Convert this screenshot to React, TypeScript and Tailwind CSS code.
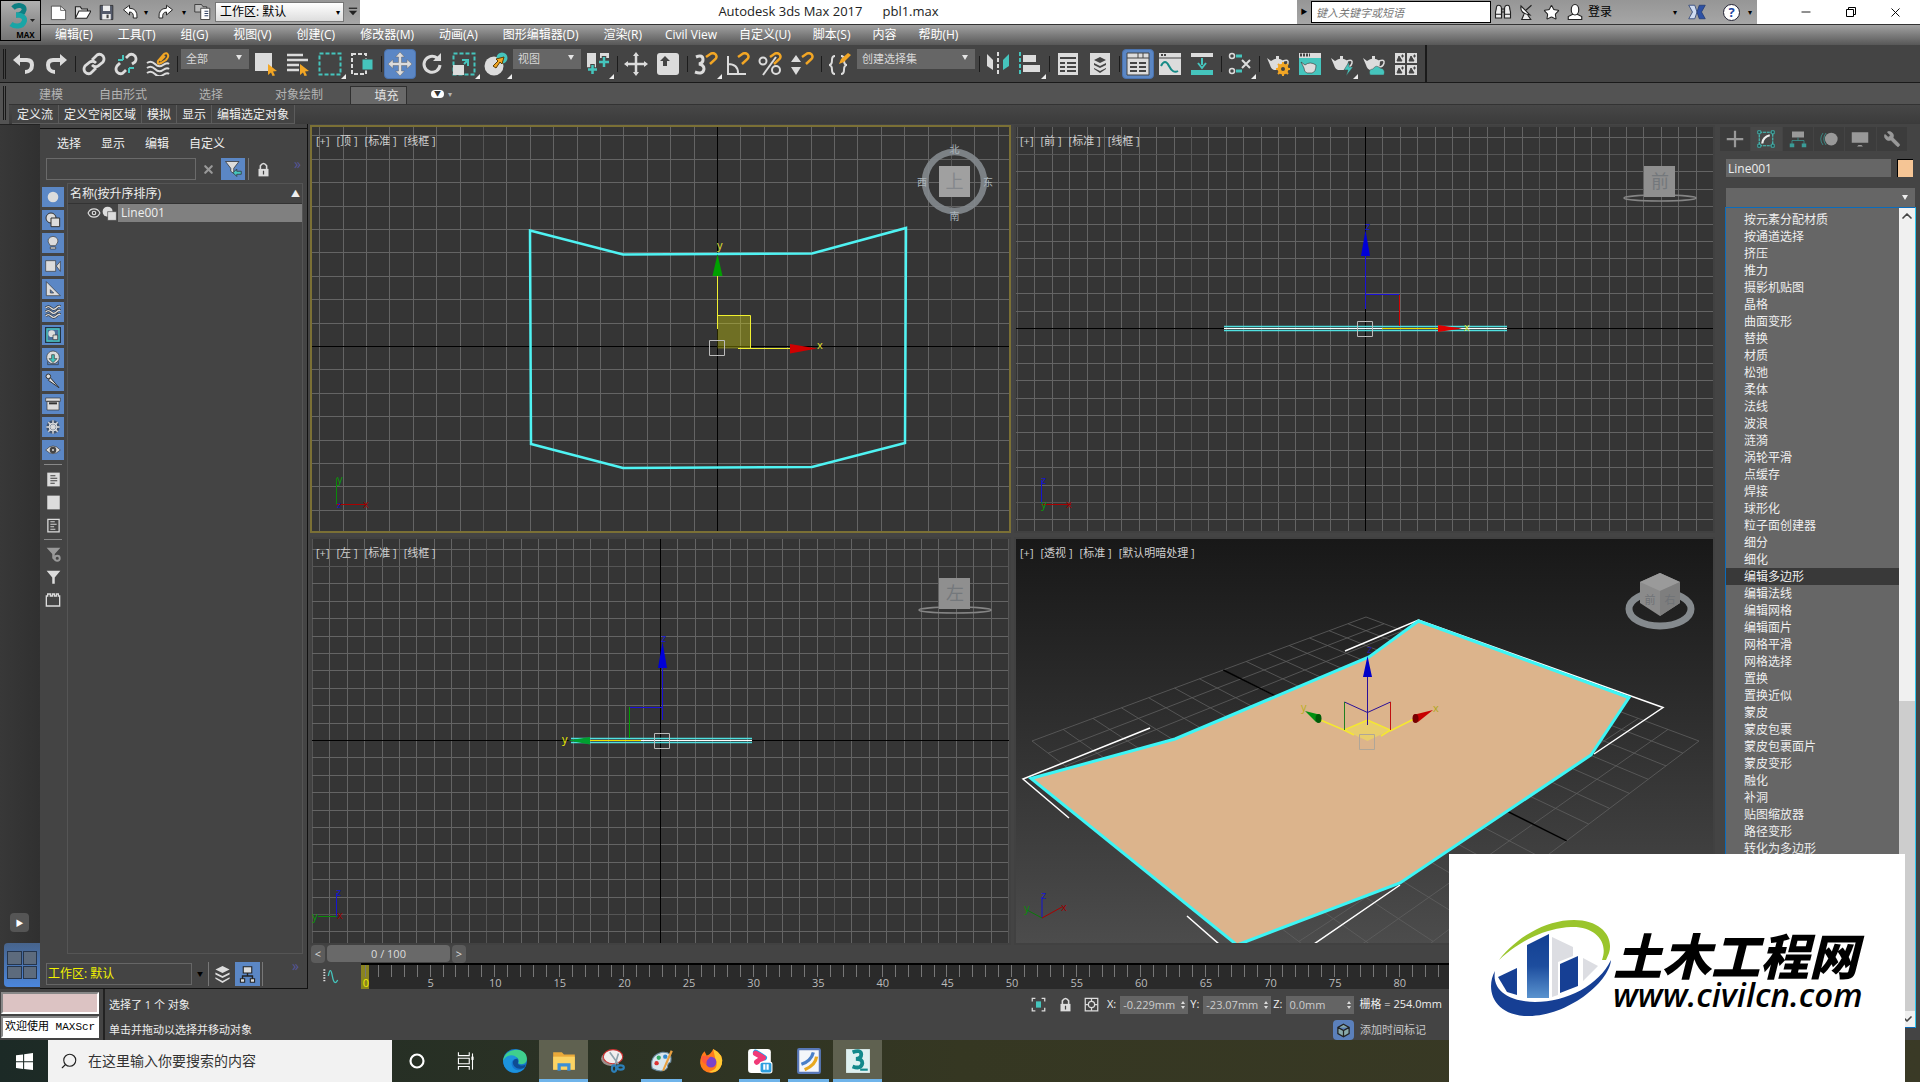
import type { ReactNode } from 'react'
import { ChevronUp, ChevronDown, Minus, X, Search, Star, Wrench, Eye } from 'lucide-react'

const LIGHT = '#dcdcdc'
const TEAL = '#45c5bd'
const GOLD = '#f2a625'

const editMenus = ['编辑(E)', '工具(T)', '组(G)', '视图(V)', '创建(C)', '修改器(M)', '动画(A)', '图形编辑器(D)', '渲染(R)']
const extraMenus = ['Civil View', '自定义(U)', '脚本(S)', '内容', '帮助(H)']

const modifiers = [
  '按元素分配材质', '按通道选择', '挤压', '推力', '摄影机贴图', '晶格', '曲面变形', '替换', '材质', '松弛',
  '柔体', '法线', '波浪', '涟漪', '涡轮平滑', '点缓存', '焊接', '球形化', '粒子面创建器', '细分', '细化',
  '编辑多边形', '编辑法线', '编辑网格', '编辑面片', '网格平滑', '网格选择', '置换', '置换近似', '蒙皮',
  '蒙皮包裹', '蒙皮包裹面片', '蒙皮变形', '融化', '补洞', '贴图缩放器', '路径变形', '转化为多边形',
]

function Glyph({ children, size = 24, className = '' }: { children: ReactNode; size?: number; className?: string }) {
  return (
    <svg viewBox="0 0 24 24" width={size} height={size} fill="none" aria-hidden="true" className={`shrink-0 ${className}`}>
      {children}
    </svg>
  )
}

function Tool({ label, active, flyout, children }: { label: string; active?: boolean; flyout?: boolean; children: ReactNode }) {
  return (
    <button
      aria-label={label}
      className={`relative flex h-[30px] w-8 shrink-0 items-center justify-center ${active ? 'rounded-sm border border-[#4a72ad] bg-[#5b87c5]' : ''}`}
    >
      <Glyph>{children}</Glyph>
      {flyout && (
        <svg viewBox="0 0 5 5" className="absolute right-0 bottom-0 h-[5px] w-[5px]" aria-hidden="true">
          <path d="M5 0V5H0Z" fill="#eee" />
        </svg>
      )}
    </button>
  )
}

function Sep() {
  return <span className="flex h-[30px] w-[6px] shrink-0 items-center justify-center"><span className="h-4 w-px bg-[#1c1c1c]" /></span>
}

function ToolSelect({ label, value, width }: { label: string; value: string; width: string }) {
  return (
    <span className={`relative mx-px h-5 shrink-0 ${width}`}>
      <select aria-label={label} className="block h-5 w-full appearance-none bg-[#666] pl-[5px] text-[11px] leading-4 text-[#d8d8d8]">
        <option>{value}</option>
      </select>
      <svg viewBox="0 0 6 5" className="pointer-events-none absolute top-[6px] right-[7px] h-[5px] w-[6px]" aria-hidden="true">
        <path d="M0 0H6L3 5Z" fill="#e5e5e5" />
      </svg>
    </span>
  )
}

function Padlock({ size }: { size: number }) {
  return (
    <Glyph size={size}>
      <path d="M4 11H20V23H4Z" fill={LIGHT} />
      <path d="M7 11V6Q12-1 17 6V11" stroke={LIGHT} strokeWidth="2.500" />
      <path d="M11 14H13V20H11Z" fill="#444" />
    </Glyph>
  )
}

const cursor = <path d="M14 12L23 19L19 19.500L21 23.500L18.500 24L17 20.500L14 23Z" fill={GOLD} />
const magnet = <path d="M12 5L17 1.500C21 0 24 4 21.500 7L16 12" stroke={GOLD} strokeWidth="2.500" />
const teapot = (
  <>
    <path d="M1 6L5 9Q11 4 18 9Q18 17 14 18H8Q5 17 4 13Z" fill={LIGHT} />
    <path d="M17 9Q23 7 22 11Q21 15 17 15" stroke={LIGHT} strokeWidth="1.500" />
    <path d="M10 4H13V7H10Z" fill={LIGHT} />
  </>
)

function TitleBar() {
  return (
    <header className="relative flex h-6 shrink-0 bg-white">
      <div className="flex w-[360px] shrink-0 items-center bg-linear-to-b from-[#969696] to-[#a6a6a6] pl-[50px] text-black">
        <button aria-label="新建" className="w-6">
          <Glyph size={17}><path d="M2 3H15L22 9V22H2Z" fill="#fff" stroke="#333" /><path d="M15 3V9H22" stroke="#333" /></Glyph>
        </button>
        <button aria-label="打开" className="w-6">
          <Glyph size={17}><path d="M2 20V4H9L11 7H19V10" fill="#ddd" stroke="#222" strokeWidth="1.500" /><path d="M2 20L7 10H24L18 20Z" fill="#fff" stroke="#222" strokeWidth="1.500" /></Glyph>
        </button>
        <button aria-label="保存" className="w-6">
          <Glyph size={17}><path d="M3 2H21V22H3Z" fill="#555b6b" stroke="#222" /><path d="M7 2H17V10H7ZM6 14H18V22H6Z" fill="#eee" /><path d="M12 15H15V20H12Z" fill="#444" /></Glyph>
        </button>
        <button aria-label="撤消" className="w-[22px]">
          <Glyph size={18}><path d="M2 9L10 3V7Q21 7 20 20H15Q16 12 10 12V16Z" fill="#fff" stroke="#222" strokeWidth="1.300" /></Glyph>
        </button>
        <span className="w-3 text-[8px]">▾</span>
        <button aria-label="重做" className="w-[22px]">
          <Glyph size={18}><path d="M22 9L14 3V7Q3 7 4 20H9Q8 12 14 12V16Z" fill="#fff" stroke="#222" strokeWidth="1.300" /></Glyph>
        </button>
        <span className="w-4 pl-1 text-[8px]">▾</span>
        <button aria-label="项目文件夹" className="w-[21px]">
          <Glyph size={18}><path d="M1 2H10L12 5H17V12H1Z" fill="#bbb" stroke="#222" /><path d="M9 7H21V22H9Z" fill="#fff" stroke="#222" /><path d="M14 11H19M14 14H19M14 17H19" stroke="#346" strokeWidth="1.500" /></Glyph>
        </button>
        <span className="relative h-5 w-[129px]">
          <select aria-label="工作区" className="block h-5 w-full appearance-none border border-[#777] bg-linear-to-b from-white to-[#ddd] pl-1 text-xs leading-4 text-black">
            <option>工作区: 默认</option>
          </select>
          <span className="pointer-events-none absolute top-1 right-1 text-[8px] leading-3">▾</span>
        </span>
        <button aria-label="自定义快速访问" className="ml-1">
          <Glyph size={10}><path d="M2 3H22" stroke="#222" strokeWidth="3" /><path d="M2 9H22L12 20Z" fill="#222" /></Glyph>
        </button>
      </div>
      <h1 className="flex flex-1 items-center justify-center gap-5 pb-px text-[13px] text-[#222]">
        <span>Autodesk 3ds Max 2017</span>
        <span>pbl1.max</span>
      </h1>
      <div className="flex w-[460px] shrink-0 items-center bg-linear-to-b from-[#969696] to-[#a6a6a6] text-black">
        <span className="w-[14px] text-center text-[7px]">▶</span>
        <input
          aria-label="键入关键字或短语"
          placeholder="键入关键字或短语"
          className="h-[22px] w-[180px] border border-black bg-white px-1 text-[11px] italic placeholder:text-[#777]"
        />
        <button aria-label="搜索" className="flex w-6 justify-center">
          <Glyph size={18}><path d="M3 8Q3 3 6 3Q10 3 10 8V20H2V12ZM21 8Q21 3 18 3Q14 3 14 8V20H22V12Z" fill="#eee" stroke="#222" strokeWidth="1.500" /><path d="M10 8H14V12H10ZM2 15H10M14 15H22" stroke="#222" strokeWidth="1.500" /></Glyph>
        </button>
        <button aria-label="通讯中心" className="flex w-6 justify-center">
          <Glyph size={18}><path d="M4 4Q2 14 16 16Z" fill="#fff" stroke="#222" strokeWidth="1.500" /><path d="M10 10L18 3M8 15L5 22H17L13 16" fill="#eee" stroke="#222" strokeWidth="1.500" /></Glyph>
        </button>
        <button aria-label="收藏夹" className="flex w-6 justify-center"><Star size={17} fill="#fff" stroke="#222" strokeWidth={1.5} /></button>
        <button aria-label="登录" className="flex w-[110px] items-center gap-1 pl-[3px] text-xs">
          <Glyph size={18}><path d="M3 22V18L9 15H15L21 18V22Z" fill="#fff" stroke="#222" strokeWidth="1.500" /><ellipse cx="12" cy="9" rx="5" ry="7" fill="#fff" stroke="#222" strokeWidth="1.500" /></Glyph>
          登录
        </button>
        <span className="w-[15px] text-[8px]">▾</span>
        <button aria-label="Exchange" className="flex w-[35px] justify-start">
          <Glyph size={18}><path d="M1 3H9L12 12L9 21H1L6 12Z" fill="#cfdcf2" stroke="#223a70" /><path d="M23 3H15L12 12L15 21H23L18 12Z" fill="#2d51a5" stroke="#223a70" /></Glyph>
        </button>
        <button aria-label="帮助" className="flex h-[17px] w-[17px] items-center justify-center rounded-full border border-[#223] bg-white text-[13px] leading-4 font-bold text-[#1d45a0]">?</button>
        <span className="pl-2 text-[8px]">▾</span>
      </div>
      <div className="mr-[2px] ml-[26px] flex w-[135px] shrink-0 text-black">
        <button aria-label="最小化" className="flex flex-1 items-center justify-center"><Minus size={14} strokeWidth={1.5} /></button>
        <button aria-label="还原" className="flex flex-1 items-center justify-center">
          <svg viewBox="0 0 10 10" className="h-[10px] w-[10px]" fill="none" stroke="#000"><path d="M.5 2.500H7.500V9.500H.5ZM2.500 2.500V.5H9.500V7.500H7.500" /></svg>
        </button>
        <button aria-label="关闭" className="flex flex-1 items-center justify-center"><X size={15} strokeWidth={1.5} /></button>
      </div>
      <button aria-label="应用程序" className="absolute top-0 left-0 z-10 flex h-[41px] w-[41px] flex-col border border-black bg-linear-to-b from-[#b0b0b0] to-[#757575] pt-[2px] pl-[6px]">
        <svg viewBox="0 0 28 26" className="h-[26px] w-7" fill="none" aria-hidden="true">
          <path d="M6 5C10 1 18 2 17 7C16 11 12 12 9 12" stroke="#0d7f83" strokeWidth="5" />
          <path d="M9 12C15 12 19 14 17 19C15 24 8 24 4 21" stroke="#19a5a6" strokeWidth="5" />
          <path d="M23 16H28L25.500 19Z" fill="#222" />
        </svg>
        <span className="pl-1 text-[8px] leading-[11px] font-bold text-black">MAX</span>
      </button>
    </header>
  )
}

function Toolbar() {
  return (
    <div className="flex h-[38px] shrink-0 border-b border-[#1a1a1a] bg-[#444]">
      <div className="flex items-start border-r-2 border-[#1a1a1a] pt-[4px] pr-[3px]">
        <span className="mr-[2px] ml-[3px] h-[30px] w-[3px] border-x border-[#181818]" />
        <Tool label="撤消"><path d="M1 8L8 2V6H15Q22 6 22 13Q22 21 13 22V18Q18 18 18 13Q18 10 14 10H8V14Z" fill={LIGHT} /></Tool>
        <Tool label="重做"><path d="M23 8L16 2V6H9Q2 6 2 13Q2 21 11 22V18Q6 18 6 13Q6 10 10 10H16V14Z" fill={LIGHT} /></Tool>
        <Sep />
        <Tool label="选择并链接">
          <g stroke={LIGHT} strokeWidth="2.800"><path d="M10 8L15 3Q18 1 21 4Q23 7 21 10L16 14Q13 16 10 13" /><path d="M14 16L9 21Q6 23 3 20Q1 17 3 14L8 10Q11 8 14 11" /></g>
        </Tool>
        <Tool label="断开选择链接">
          <g stroke={LIGHT} strokeWidth="2.800"><path d="M12 6L15 3Q18 1 21 4Q23 7 21 10L18 12" /><path d="M12 18L9 21Q6 23 3 20Q1 17 3 14L6 11" /></g>
          <path d="M9 3V8M4 8H9M15 21V16M15 16H20" stroke={TEAL} strokeWidth="2" />
        </Tool>
        <Tool label="绑定到空间扭曲">
          <g stroke={LIGHT} strokeWidth="2"><path d="M1 11Q5 8 9 12T17 13T23 12M1 16Q5 13 9 17T17 18T23 17M1 21Q5 18 9 22T17 23T23 22" /></g>
          <path d="M12 9L18 2Q21 0 22 3Q23 5 20 8L15 11Q11 13 12 9ZM14 9L19 4" stroke={GOLD} strokeWidth="2" />
        </Tool>
        <Sep />
        <ToolSelect label="选择过滤器" value="全部" width="w-[68px]" />
        <Tool label="选择对象"><path d="M1 1H18V19H1Z" fill={LIGHT} />{cursor}</Tool>
        <Tool label="按名称选择"><path d="M1 3H17M1 8H22M1 13H13M1 18H13" stroke={LIGHT} strokeWidth="2.500" />{cursor}</Tool>
        <Tool label="矩形选择区域" flyout><path d="M1.500 1.500H22.500V22.500H1.500Z" stroke={TEAL} strokeWidth="2" strokeDasharray="4 2" /></Tool>
        <Tool label="窗口/交叉"><path d="M2 2H16V22H2Z" stroke={LIGHT} strokeWidth="2" strokeDasharray="4 2" /><path d="M12 7H23V18H12Z" fill={TEAL} stroke="#444" /></Tool>
        <Sep />
        <Tool label="选择并移动" active>
          <path d="M12 0L16.500 5H13.500V10.500H19V7.500L24 12L19 16.500V13.500H13.500V19H16.500L12 24L7.500 19H10.500V13.500H5V16.500L0 12L5 7.500V10.500H10.500V5H7.500Z" fill={LIGHT} stroke="#666" strokeWidth=".5" />
        </Tool>
        <Tool label="选择并旋转"><path d="M17 6A8 8 0 1 0 20 13" stroke={LIGHT} strokeWidth="3" /><path d="M13 9H21V1Z" fill={LIGHT} /></Tool>
        <Tool label="选择并缩放" flyout>
          <path d="M1.500 1.500H22.500V22.500H1.500Z" stroke={TEAL} strokeWidth="2" strokeDasharray="4 2" />
          <path d="M1 13H12V23H1Z" fill={LIGHT} /><path d="M10 8H16V14M16 8L12 12" stroke={TEAL} strokeWidth="2" />
        </Tool>
        <Tool label="选择并放置" flyout>
          <circle cx="10" cy="14" r="9.500" fill={LIGHT} /><circle cx="18" cy="6" r="5.500" fill={TEAL} />
          <path d="M9 14L14 9L12 7L20 5L18 12L16 10L12 16Z" fill={GOLD} stroke="#5c3d00" />
        </Tool>
        <ToolSelect label="参考坐标系" value="视图" width="w-[68px]" />
        <Tool label="使用轴点中心" flyout>
          <path d="M1 1H10V16H1ZM14 1H23V6H14Z" fill={LIGHT} /><path d="M6.500 12V23M1 17.500H12M18 4V16M12.500 10H23.500" stroke="#444" strokeWidth="4.500" /><path d="M6.500 13V22M2 17.500H11M18 5V15M13 10H23" stroke={TEAL} strokeWidth="2.500" />
        </Tool>
        <Sep />
        <Tool label="选择并操纵"><path d="M12 2V22M2 12H22" stroke={LIGHT} strokeWidth="2.500" /><path d="M12 0L15 4H9ZM12 24L15 20H9ZM0 12L4 9V15ZM24 12L20 9V15Z" fill={LIGHT} /></Tool>
        <Tool label="键盘快捷键覆盖切换"><rect x="1" y="1" width="22" height="22" rx="3" fill={LIGHT} /><path d="M9 4L14 9H11V14H7V9H4Z" fill="#444" /></Tool>
        <Sep />
        <Tool label="捕捉开关" flyout><path d="M2 5Q9 2 9 8Q9 11 5 12Q10 13 10 17Q9 23 1 20" stroke={LIGHT} strokeWidth="3" />{magnet}</Tool>
        <Tool label="角度捕捉切换"><path d="M2 4V22H20M2 12Q12 12 12 21" stroke={LIGHT} strokeWidth="2" />{magnet}</Tool>
        <Tool label="百分比捕捉切换"><path d="M18 5L5 23" stroke={LIGHT} strokeWidth="2" /><circle cx="5" cy="9" r="3.500" stroke={LIGHT} strokeWidth="2" /><circle cx="18" cy="18" r="4" stroke={LIGHT} strokeWidth="2" />{magnet}</Tool>
        <Tool label="微调器捕捉切换"><path d="M6 3L11 10H1ZM6 23L11 15H1Z" fill={LIGHT} />{magnet}</Tool>
        <Sep />
        <Tool label="编辑命名选择集"><path d="M7 4Q4 4 4 8Q4 13 1 13Q4 13 4 18Q4 22 7 22M13 4Q16 4 16 8Q16 13 19 13Q16 13 16 18Q16 22 13 22" stroke={LIGHT} strokeWidth="2" /><path d="M11 12L13 7L20 1L23 3L16 10Z" fill={GOLD} /></Tool>
        <ToolSelect label="命名选择集" value="创建选择集" width="w-[118px]" />
        <Sep />
        <Tool label="镜像"><path d="M1 2L7 8V18L1 14Z" fill={LIGHT} /><path d="M23 2L17 8V18L23 14Z" fill={TEAL} /><path d="M12 0V24" stroke={LIGHT} strokeWidth="2" strokeDasharray="4 2" /></Tool>
        <Tool label="对齐" flyout><path d="M2 0V24" stroke={TEAL} strokeWidth="2" strokeDasharray="4 2" /><path d="M5 3H18V10H5ZM5 13H22V20H5Z" fill={LIGHT} /></Tool>
        <Sep />
        <Tool label="切换场景资源管理器"><path d="M2 1H22V23H2Z" fill={LIGHT} /><path d="M4 6H20M4 11H9M11 11H20M4 15H9M11 15H20M4 19H9M11 19H20" stroke="#444" strokeWidth="2" /></Tool>
        <Tool label="切换层资源管理器"><path d="M2 1H22V23H2Z" fill={LIGHT} /><path d="M12 5L18 8L12 11L6 8ZM6 11L12 14L18 11V13L12 16L6 13ZM6 16L12 19L18 16V17L12 21L6 17Z" fill="#444" /></Tool>
        <Sep />
        <Tool label="切换功能区" active><path d="M1 1H23V23H1Z" fill={LIGHT} stroke="#444" /><path d="M1 6H23M12 1V6M17 1V6" stroke="#444" /><path d="M4 11H11M13 11H20M4 15H11M13 15H20M4 19H11M13 19H20" stroke="#444" strokeWidth="2" /></Tool>
        <Tool label="曲线编辑器"><path d="M1 1H23V23H1Z" fill={LIGHT} /><path d="M3 3H9" stroke="#444" strokeWidth="2" strokeDasharray="2 1" /><path d="M1 6H23" stroke="#444" /><path d="M3 14Q7 6 11 14T20 19" stroke="#168a86" strokeWidth="2" /></Tool>
        <Tool label="图解视图"><path d="M1 1H23V5H1Z" fill={LIGHT} /><path d="M1 18H23V23H1Z" fill={TEAL} /><path d="M12 6V13M8 11L12 16L16 11" stroke={TEAL} strokeWidth="2" /></Tool>
        <Sep />
        <Tool label="材质编辑器" flyout>
          <circle cx="4" cy="4" r="2.500" stroke={LIGHT} strokeWidth="1.500" /><circle cx="4" cy="19" r="2.500" stroke={LIGHT} strokeWidth="1.500" />
          <path d="M8 4H14M8 19H14" stroke={TEAL} strokeWidth="3" /><path d="M14 8L22 16M22 8L14 16" stroke={LIGHT} strokeWidth="2" />
        </Tool>
        <Sep />
        <Tool label="渲染设置">{teapot}<circle cx="17" cy="17" r="4" stroke={GOLD} strokeWidth="3" /><path d="M17 10V24M10 17H24M12 12L22 22M22 12L12 22" stroke={GOLD} strokeWidth="2" /><circle cx="17" cy="17" r="2" fill="#444" /></Tool>
        <Tool label="渲染帧窗口"><path d="M1 1H23V23H1Z" fill={LIGHT} /><path d="M2 3H12" stroke="#444" strokeWidth="3" strokeDasharray="2 1" /><path d="M1 6H23V23H1Z" fill={TEAL} /><path d="M3 10L7 13Q12 9 18 13Q18 20 14 21H9Q6 20 6 16Z" fill={LIGHT} stroke="#333" strokeWidth=".6" /></Tool>
        <Tool label="渲染产品" flyout>{teapot}<path d="M19 10L14 18H18L16 24L23 15H19Z" fill={TEAL} stroke="#444" strokeWidth=".5" /></Tool>
        <Tool label="在云中渲染">{teapot}<path d="M8 23Q6 17 11 17Q14 12 18 16Q24 17 22 23Z" fill={TEAL} stroke="#444" strokeWidth=".5" /></Tool>
        <Tool label="打开 A360 库">
          <path d="M1 1H11V11H1ZM13 1H23V11H13ZM1 13H11V23H1ZM13 13H23V23H13Z" fill={LIGHT} />
          <path d="M3 9L5 4L8 9ZM15 9L17 4L20 9ZM3 21L5 16L8 21ZM15 21L17 16L20 21ZM8 3H9V5H8ZM20 3H21V5H20ZM8 15H9V17H8ZM20 15H21V17H20Z" fill="#444" stroke="#444" />
        </Tool>
      </div>
    </div>
  )
}

function Ribbon() {
  return (
    <div className="flex h-[41px] shrink-0 bg-[#535353]">
      <span className="mt-[3px] mr-[3px] ml-[3px] h-[34px] w-[3px] shrink-0 border-x border-[#181818]" />
      <div className="flex-1">
        <div role="tablist" className="flex h-[22px] border-b border-[#333] text-xs leading-6 text-[#b4b4b4]">
          <button role="tab" className="ml-[30px] leading-6">建模</button>
          <button role="tab" className="ml-9">自由形式</button>
          <button role="tab" className="ml-[52px]">选择</button>
          <button role="tab" className="ml-[52px]">对象绘制</button>
          <button role="tab" aria-selected className="mt-[3px] ml-[27px] w-[57px] border border-b-0 border-[#2f2f2f] bg-[#696969] pl-4 leading-[18px] text-[#e2e2e2]">填充</button>
          <button aria-label="最小化功能区" className="ml-6 flex items-center gap-1 text-[8px]">
            <span className="flex h-2 w-[13px] items-center justify-center rounded-sm bg-white text-[7px] text-[#333]">▼</span>▾
          </button>
        </div>
        <div className="flex h-[19px] bg-linear-to-b from-[#474747] to-[#3b3b3b] pl-[3px] text-xs text-[#eee]">
          {['定义流', '定义空闲区域', '模拟', '显示', '编辑选定对象'].map((t) => (
            <button key={t} className="h-[19px] border-r border-b border-[#5c5c5c] bg-[#444] px-[5px] pt-px leading-[18px]">{t}</button>
          ))}
        </div>
      </div>
    </div>
  )
}

const filters: { name: string; art: ReactNode }[] = [
  { name: '几何体', art: <circle cx="12" cy="12" r="8" fill={LIGHT} /> },
  { name: '图形', art: <><circle cx="9" cy="9" r="7.500" fill={LIGHT} stroke="#333" strokeWidth="1.500" /><path d="M9 9H22V22H9Z" fill={LIGHT} stroke="#333" strokeWidth="1.500" /></> },
  { name: '灯光', art: <><path d="M8 16Q3 10 5 6Q12-2 19 6Q21 10 16 16Z" fill={LIGHT} stroke="#333" /><path d="M8 18H16V21H8Z" fill={LIGHT} stroke="#333" /></> },
  { name: '摄影机', art: <><path d="M1 4H16V20H1Z" fill={LIGHT} stroke="#333" /><path d="M17 12L23 5V20Z" fill={LIGHT} stroke="#333" /></> },
  { name: '辅助对象', art: <><path d="M2 1V22H23Z" fill={LIGHT} stroke="#333" /><path d="M8 13V18H13Z" fill="#5b87c5" stroke="#333" /></> },
  { name: '空间扭曲', art: <><path d="M1 6Q5 2 9 6T17 6T23 4M1 12Q5 8 9 12T17 12T23 10M1 18Q5 14 9 18T17 18T23 16" stroke="#333" strokeWidth="4" /><path d="M1 6Q5 2 9 6T17 6T23 4M1 12Q5 8 9 12T17 12T23 10M1 18Q5 14 9 18T17 18T23 16" stroke={LIGHT} strokeWidth="2" /></> },
  { name: '组', art: <><path d="M1 1H23V23H1Z" fill="#4b6f9c" stroke="#234" strokeWidth="2" /><path d="M3 3H21V21H3Z" stroke={TEAL} strokeWidth="2" /><circle cx="10" cy="10" r="5" fill={LIGHT} /><path d="M12 12H19V19H12Z" fill={LIGHT} stroke="#333" /></> },
  { name: '外部参照', art: <><circle cx="12" cy="11" r="9.500" fill={LIGHT} stroke="#333" /><path d="M10 7H14V13H18L12 19L6 13H10Z" fill={TEAL} stroke="#333" /><path d="M4 17V22H20V17" stroke="#333" /></> },
  { name: '骨骼', art: <><path d="M8 7L21 22L5 11Z" fill={LIGHT} stroke="#333" strokeWidth="1.500" /><circle cx="5" cy="5" r="3.500" fill={LIGHT} stroke="#333" strokeWidth="1.500" /></> },
  { name: '容器', art: <><path d="M1 3H23V8H1ZM3 8H21V21H3Z" fill={LIGHT} stroke="#333" /><path d="M6 11H18" stroke="#333" strokeWidth="3" /></> },
  { name: '冻结', art: <><circle cx="12" cy="12" r="10" fill="#333" opacity=".6" /><path d="M12 2V22M2 12H22M5 5L19 19M19 5L5 19" stroke={LIGHT} strokeWidth="2" /><circle cx="12" cy="12" r="6" stroke={LIGHT} strokeWidth="1.500" /></> },
  { name: '隐藏', art: <><path d="M1 12Q12 0 23 12Q12 23 1 12Z" fill={LIGHT} stroke="#333" /><circle cx="12" cy="12" r="5" fill="#444" /><circle cx="12" cy="12" r="1.500" fill={LIGHT} /></> },
]

function SceneExplorer() {
  return (
    <aside className="flex w-[268px] shrink-0 flex-col border-r border-[#111] bg-[#444] pt-1 text-xs text-[#eee]">
      <nav className="flex h-[30px] items-center gap-5 border-t border-[#111] pl-[17px]">
        {['选择', '显示', '编辑', '自定义'].map((t) => <button key={t} className="leading-4">{t}</button>)}
      </nav>
      <div className="flex h-6 items-start pl-[6px]">
        <input aria-label="查找" className="h-[22px] w-[150px] border border-[#6a6a6a] bg-transparent px-1" />
        <button aria-label="清除" className="flex h-[22px] w-[25px] items-center justify-center text-[#999]"><X size={13} strokeWidth={4} /></button>
        <button aria-label="过滤器" className="flex h-[22px] w-6 items-center justify-center bg-[#5b87c5]">
          <Glyph size={18}><path d="M2 2H20L13 11V18L9 15V11Z" fill={LIGHT} stroke="#333" /><path d="M12 17L17 12V15H23V19H17V22Z" fill={TEAL} stroke="#333" /></Glyph>
        </button>
        <span className="ml-[3px] h-[22px] w-px bg-[#777]" />
        <button aria-label="锁定" className="ml-[6px] flex h-[22px] w-4 items-center justify-center"><Padlock size={15} /></button>
        <span className="ml-[23px] text-sm leading-3 text-[#56569a]">»</span>
      </div>
      <div className="flex min-h-0 flex-1 pt-px">
        <div className="flex w-[27px] shrink-0 flex-col gap-[3px] pt-1 pl-[2px]">
          {filters.map((f) => (
            <button key={f.name} aria-label={f.name} className="flex h-5 w-[22px] shrink-0 items-center justify-center bg-[#5b87c5]">
              <Glyph size={16}>{f.art}</Glyph>
            </button>
          ))}
          <hr className="my-px ml-[2px] w-[18px] border-[#888]" />
          <button aria-label="全部选择" className="flex h-5 w-[22px] items-center justify-center"><Glyph size={15}><path d="M2 1H22V23H2Z" fill={LIGHT} /><path d="M7 6H15M7 10H18M7 14H18M7 18H14" stroke="#333" strokeWidth="1.500" /></Glyph></button>
          <button aria-label="全部不选" className="flex h-5 w-[22px] items-center justify-center"><Glyph size={15}><path d="M2 1H22V23H2Z" fill={LIGHT} /></Glyph></button>
          <button aria-label="反选" className="flex h-5 w-[22px] items-center justify-center"><Glyph size={15}><path d="M3 2H21V22H3Z" stroke={LIGHT} strokeWidth="2" /><path d="M7 6H14M7 10H17M7 14H13M7 18H15" stroke={LIGHT} strokeWidth="1.500" /></Glyph></button>
          <hr className="my-px ml-[2px] w-[18px] border-[#888]" />
          <button aria-label="编辑过滤器" className="flex h-5 w-[22px] items-center justify-center"><Glyph size={15}><path d="M1 1H23L14 11V22L10 18V11Z" fill="#999" /><circle cx="18" cy="18" r="4" stroke="#999" strokeWidth="3" fill="#444" /></Glyph></button>
          <button aria-label="应用过滤器" className="flex h-5 w-[22px] items-center justify-center"><Glyph size={15}><path d="M1 1H23L14 12V22H10V12Z" fill={LIGHT} /></Glyph></button>
          <button aria-label="图层" className="flex h-5 w-[22px] items-center justify-center"><Glyph size={16}><path d="M2 6H4V3H8V6H11V3H14V6H17V3H20V6H22V21H2Z" stroke={LIGHT} strokeWidth="2" /></Glyph></button>
        </div>
        <div className="mr-1 mb-[6px] flex-1 border border-[#555]">
          <div className="flex h-5 items-center justify-between border-b border-[#333] pr-[2px] pl-[2px]">
            <span>名称(按升序排序)</span>
            <span className="text-[9px]">▲</span>
          </div>
          <div className="flex h-[18px] items-center pl-[18px]">
            <Eye size={14} className="mx-px shrink-0 text-[#ddd]" />
            <Glyph size={15}><circle cx="9" cy="9" r="8" fill={LIGHT} /><path d="M9 9H23V23H9Z" fill={LIGHT} stroke="#444" /></Glyph>
            <span className="ml-px flex-1 bg-[#808080] pl-[3px] leading-[18px]">Line001</span>
          </div>
        </div>
      </div>
      <div className="flex h-[29px] shrink-0 items-center border-b border-[#111] pl-[6px]">
        <span className="w-[146px] border border-[#666] pl-px leading-5 text-[#f2f200]">工作区: 默认</span>
        <span className="w-4 text-center text-[6px] text-black">▼</span>
        <span className="h-6 w-px bg-[#777]" />
        <button aria-label="层" className="flex h-6 w-[26px] items-center justify-center"><Glyph size={17}><path d="M12 0L22 5L12 10L2 5ZM2 9L12 14L22 9V12L12 17L2 12ZM2 16L12 21L22 16V18L12 24L2 18Z" fill={LIGHT} /></Glyph></button>
        <button aria-label="层次" className="flex h-6 w-[25px] items-center justify-center bg-[#5b87c5]"><Glyph size={17}><path d="M6 1H18V10H6ZM2 18H8V23H2ZM16 18H22V23H16Z" fill={LIGHT} stroke="#222" strokeWidth="1.500" /><path d="M12 10V14M5 18V14H19V18" stroke="#222" strokeWidth="2" /></Glyph></button>
        <span className="ml-[2px] h-6 w-px bg-[#777]" />
        <span className="ml-[29px] pb-4 text-sm leading-3 text-[#56569a]">»</span>
      </div>
    </aside>
  )
}

type Box = { x: number; y: number; w: number; h: number }

function GridLines({ box, cx, cy, step }: { box: Box; cx: number; cy: number; step: number }) {
  const n = 24
  const offsets = Array.from({ length: n * 2 + 1 }, (_, i) => i - n).filter((i) => i !== 0)
  return (
    <g shapeRendering="crispEdges">
      {offsets.map((i) => (
        <g key={i} stroke={i % 10 === 0 ? '#555' : '#646464'}>
          <path d={`M${cx + i * step} ${box.y}V${box.y + box.h}`} />
          <path d={`M${box.x} ${cy + i * step}H${box.x + box.w}`} />
        </g>
      ))}
      <path d={`M${cx} ${box.y}V${box.y + box.h}M${box.x} ${cy}H${box.x + box.w}`} stroke="#000" />
    </g>
  )
}

function Viewport({ box, labels, active, shaded, children }: { box: Box; labels: string[]; active?: boolean; shaded?: boolean; children: ReactNode }) {
  return (
    <section className={`relative min-h-0 min-w-0 overflow-hidden border-2 ${active ? 'border-[#7b7035]' : 'border-[#414141]'} ${shaded ? 'bg-linear-to-b from-[#181818] to-[#4c4c4c]' : 'bg-[#353535]'}`}>
      <svg viewBox={`${box.x} ${box.y} ${box.w} ${box.h}`} preserveAspectRatio="xMidYMid slice" className="absolute inset-0 h-full w-full" fill="none" fontSize="11">
        {children}
      </svg>
      <div className="relative flex gap-[7px] pt-[6px] pl-1 text-[11px] leading-4 text-[#cfcfcf]">
        {labels.map((l) => <span key={l}>{l}</span>)}
      </div>
    </section>
  )
}

const topBox = { x: 312, y: 127, w: 697, h: 404 }
const frontBox = { x: 1016, y: 127, w: 697, h: 404 }
const leftBox = { x: 312, y: 539, w: 697, h: 404 }
const perspBox = { x: 1016, y: 539, w: 697, h: 404 }

// home grid of the perspective view, projected from the unit square
function project(u: number, v: number) {
  const g = 0.3407
  const h = -0.3377
  const w = g * u + h * v + 1
  return [
    (((1366 - 1032 + g * 1366) * u + (1366 - 1032 + h * 1366) * v + 1032) / w).toFixed(1),
    (((617 - 741 + g * 617) * u + (992 - 741 + h * 992) * v + 741) / w).toFixed(1),
  ].join(' ')
}

function PerspGrid() {
  const n = 14
  return (
    <g>
      {Array.from({ length: n + 1 }, (_, i) => i / n).map((t) => (
        <path key={t} d={`M${project(t, 0)}L${project(t, 1)}M${project(0, t)}L${project(1, t)}`} stroke="#5f5f5f" strokeWidth=".8" />
      ))}
      <path d={`M${project(0.5, 0)}L${project(0.5, 1)}`} stroke="#000" strokeWidth="1.500" />
    </g>
  )
}

function SideCube({ x, y, face }: { x: number; y: number; face: string }) {
  return (
    <g>
      <ellipse cx={x} cy={y + 17} rx="36" ry="3" stroke="#858585" strokeWidth="1.500" />
      <rect x={x - 16} y={y - 15} width="31" height="31" fill="#8f8f8f" />
      <text x={x} y={y + 7} fontSize="18" textAnchor="middle" fill="#74787c">{face}</text>
    </g>
  )
}

function Viewports() {
  return (
    <div className="grid min-h-0 flex-1 grid-cols-2 grid-rows-2 gap-x-[3px] gap-y-1 pt-px">
      <Viewport box={topBox} active labels={['[+]', '[顶 ]', '[标准 ]', '[线框 ]']}>
        <GridLines box={topBox} cx={717.5} cy={346.5} step={23.4} />
        <path d="M530 230.500L623 254.500L812 253.500L906 228L905 443L812 467L623 468L531 444Z" stroke="#4ff3f3" strokeWidth="2.500" />
        <path d="M717.500 315.500H750.500V348.500H717.500Z" fill="#e8e800" fillOpacity=".32" />
        <path d="M717.500 276V329M717.500 315.500H750.500V348.500M738 348.500H790" stroke="#f0f030" />
        <path d="M717.500 254L722.500 276H712.500Z" fill="#00a000" />
        <path d="M817 348.500L790 344V353.500Z" fill="#d00000" />
        <path d="M709.500 340.500H724.500V355.500H709.500Z" stroke="#bbb" />
        <text x="717" y="249" fill="#e0e030">y</text>
        <text x="817" y="349" fill="#e0e030">x</text>
        <circle cx="954.500" cy="181.500" r="29.500" stroke="#848a8e" strokeWidth="6.500" opacity=".9" />
        <path d="M939 166H970V197H939Z" fill="#a0a0a0" />
        <text x="954.500" y="188" fontSize="18" textAnchor="middle" fill="#85888c">上</text>
        <g fill="#aab4bb" fontSize="10" textAnchor="middle"><text x="954.500" y="153">北</text><text x="954.500" y="220">南</text><text x="922" y="186">西</text><text x="988" y="186">东</text></g>
        <path d="M336.500 505V478" stroke="#0a8a0a" /><path d="M336.500 504.500H367" stroke="#a00" />
        <text x="337" y="483" fill="#0a9a0a">y</text><text x="337" y="508" fill="#1010c0" fontSize="9">z</text><text x="363" y="508" fill="#900">x</text>
      </Viewport>

      <Viewport box={frontBox} labels={['[+]', '[前 ]', '[标准 ]', '[线框 ]']}>
        <GridLines box={frontBox} cx={1365.5} cy={328.5} step={17.4} />
        <path d="M1224 326.500H1507M1224 330.500H1507" stroke="#4fe0e0" strokeWidth="1.500" />
        <path d="M1224 328.500H1507" stroke="#fff" />
        <path d="M1365.500 309V256M1365.500 294.500H1399" stroke="#1a10d8" />
        <path d="M1399.500 295V326" stroke="#d00000" />
        <path d="M1382 328.500H1438" stroke="#f0e000" />
        <path d="M1365.500 230L1370 256H1361Z" fill="#0000d8" />
        <path d="M1462 328.500L1438 325V332Z" fill="#e00000" />
        <path d="M1357.500 321.500H1372.500V336.500H1357.500Z" stroke="#bbb" />
        <text x="1365" y="230" fill="#1818d8">z</text>
        <text x="1464" y="331" fill="#e0e030">x</text>
        <SideCube x={1660} y={181} face="前" />
        <path d="M1041.500 504V480" stroke="#1515d0" /><path d="M1041.500 504.500H1071" stroke="#a00" />
        <text x="1041" y="484" fill="#1515d0">z</text><text x="1041" y="508" fill="#0a9a0a">y</text><text x="1066" y="508" fill="#900">x</text>
      </Viewport>

      <Viewport box={leftBox} labels={['[+]', '[左 ]', '[标准 ]', '[线框 ]']}>
        <GridLines box={leftBox} cx={660.5} cy={740.5} step={17.4} />
        <path d="M571 738.500H752M571 742.500H752" stroke="#4fe0e0" strokeWidth="1.500" />
        <path d="M571 740.500H752" stroke="#fff" />
        <path d="M662.500 720V667M662.500 707.500H629" stroke="#1a10d8" />
        <path d="M629.500 707V738" stroke="#00a000" />
        <path d="M590 740.500H641" stroke="#f0e000" />
        <path d="M662.500 642L667 668H658Z" fill="#0000d8" />
        <path d="M568 740.500L590 737V744.500Z" fill="#00a030" />
        <path d="M654.500 733.500H669.500V748.500H654.500Z" stroke="#bbb" />
        <text x="661" y="642" fill="#1818d8">z</text>
        <text x="562" y="743" fill="#f0f000">y</text>
        <SideCube x={955} y={593} face="左" />
        <path d="M336.500 917V893" stroke="#1515d0" /><path d="M336.500 916.500H318" stroke="#0a8a0a" />
        <text x="336" y="896" fill="#1515d0">z</text><text x="312" y="920" fill="#0a9a0a">y</text><text x="337" y="919" fill="#900">x</text>
      </Viewport>

      <Viewport box={perspBox} shaded labels={['[+]', '[透视 ]', '[标准 ]', '[默认明暗处理 ]']}>
        <PerspGrid />
        <path d="M1345 651L1418.500 620L1663 707.500L1594 754M1150 728L1023 779L1069 818M1187 916L1219 944M1400 885L1314 944" stroke="#fff" strokeWidth="1.500" />
        <path d="M1418.500 621L1629 697.500L1591 755L1400 883L1237 945L1031 778.500L1175 739L1369 657Z" fill="#dcb48c" stroke="#3df5f5" strokeWidth="3" />
        <path d="M1344 730L1367.500 720L1390.500 730L1367.500 741Z" fill="#ecd860" fillOpacity=".7" />
        <path d="M1354 735L1344 730L1367.500 720L1390.500 730L1381 736M1318 719L1344 730M1414 719L1390 731" stroke="#f5e830" strokeWidth="1.500" />
        <path d="M1367.500 725V676M1344.500 702L1367.500 712.500L1390.500 702" stroke="#2a1098" />
        <path d="M1344.500 702V730" stroke="#208020" /><path d="M1390.500 702V730" stroke="#c01010" />
        <path d="M1367.500 656L1372 677H1363Z" fill="#0000c8" />
        <path d="M1305 711L1321 715L1316 722Z" fill="#009010" /><ellipse cx="1318.500" cy="718.500" rx="3" ry="4.500" fill="#005a08" />
        <path d="M1433 710L1413 715L1418 722Z" fill="#c80000" /><ellipse cx="1415.500" cy="718.500" rx="3" ry="4.500" fill="#700" />
        <path d="M1359.500 734.500H1374.500V749.500H1359.500Z" stroke="#b0a698" />
        <text x="1433" y="712" fill="#b0a820">x</text><text x="1301" y="711" fill="#b8b020">y</text><text x="1367" y="653" fill="#2418a0">z</text>
        <ellipse cx="1660" cy="609" rx="31" ry="17" stroke="#858a8e" strokeWidth="7" />
        <path d="M1660 573L1680 582V603L1660 616L1640 603V582Z" fill="#8b8b8b" />
        <path d="M1640 582L1660 591L1680 582L1660 573Z" fill="#9a9a9a" />
        <path d="M1660 591V616L1680 603V582Z" fill="#7e7e7e" />
        <g fill="#6f7276" fontSize="11" textAnchor="middle"><text x="1650" y="604">前</text><text x="1670" y="604">右</text></g>
        <path d="M1042 918V897" stroke="#1515d0" /><path d="M1042 918L1062 907" stroke="#a00" /><path d="M1042 918L1027 910" stroke="#0a7a0a" />
        <text x="1041" y="899" fill="#1515d0">z</text><text x="1061" y="911" fill="#900">x</text><text x="1024" y="912" fill="#0a8a0a">y</text>
      </Viewport>
    </div>
  )
}

function TimeLine() {
  return (
    <>
      <div className="flex h-[18px] shrink-0 gap-[2px] pl-px text-xs leading-4 text-[#ddd]">
        <button aria-label="上一帧" className="w-[14px] rounded-sm bg-[#5c5c5c] text-[11px]">&lt;</button>
        <button className="h-[17px] w-[123px] rounded-sm bg-[#696969] text-[11px]">0 / 100</button>
        <button aria-label="下一帧" className="w-[14px] rounded-sm bg-[#5c5c5c] text-[11px]">&gt;</button>
      </div>
      <div className="flex h-[26px] shrink-0">
        <div className="flex w-[51px] shrink-0 items-center justify-center pr-[10px]">
          <Glyph size={16}><path d="M2 2V22" stroke={LIGHT} strokeWidth="3" strokeDasharray="2 2" /><path d="M8 12Q11-4 14 12T22 18" stroke={TEAL} strokeWidth="2" /></Glyph>
        </div>
        <div className="relative flex-1 border-t-2 border-black bg-[#2a2a2a] pr-[58px] pl-1">
          <span className="absolute top-0 bottom-0 left-0 w-2 bg-[#8a8420]" />
          <div className="relative flex">
            {Array.from({ length: 100 }, (_, i) => (
              <div key={i} className="relative h-3 flex-1 border-l border-[#777]">
                {i % 5 === 0 && (
                  <span className={`absolute top-3 left-0 -translate-x-1/2 text-[11px] leading-3 ${i ? 'text-[#bbb]' : 'text-[#f0f000]'}`}>{i}</span>
                )}
              </div>
            ))}
          </div>
        </div>
      </div>
    </>
  )
}

function CommandPanel() {
  const tab = 'flex h-6 flex-1 items-center justify-center'
  return (
    <aside className="relative w-[205px] shrink-0 bg-[#444] pt-[3px] pr-[5px] pl-[5px] text-xs text-[#eee]">
      <div role="tablist" className="mr-2 flex gap-px">
        <button role="tab" aria-label="创建" className={`${tab} bg-[#3c3c3c]`}><Glyph size={18}><path d="M12 1V23M1 12H23" stroke="#999" strokeWidth="3" /></Glyph></button>
        <button role="tab" aria-label="修改" aria-selected className={`${tab} bg-[#484848]`}><Glyph size={18}><path d="M3 3H21V21H3Z" stroke={TEAL} strokeWidth="1.500" strokeDasharray="4 1" /><path d="M1 1H5V5H1ZM19 1H23V5H19ZM1 19H5V23H1ZM19 19H23V23H19Z" fill="#244" stroke={TEAL} /><path d="M7 18Q8 9 17 7" stroke="#eee" strokeWidth="3" /></Glyph></button>
        <button role="tab" aria-label="层次" className={`${tab} bg-[#3c3c3c]`}><Glyph size={18}><path d="M4 2H20V10H4Z" fill="#999" /><path d="M12 10V14M4 19V14H20V19" stroke="#3a9c97" /><path d="M1 18H7V23H1ZM17 18H23V23H17Z" fill="#3a9c97" /></Glyph></button>
        <button role="tab" aria-label="运动" className={`${tab} bg-[#3c3c3c]`}><Glyph size={18}><circle cx="15" cy="12" r="8.500" fill="#999" /><path d="M4 4Q-2 12 4 20M8 4Q2 12 8 20" stroke="#3a9c97" /></Glyph></button>
        <button role="tab" aria-label="显示" className={`${tab} bg-[#3c3c3c]`}><Glyph size={18}><path d="M1 3H23V17H1ZM8 22L10 20H14L16 22Z" fill="#999" /></Glyph></button>
        <button role="tab" aria-label="实用程序" className={`${tab} bg-[#3c3c3c]`}><Wrench size={18} fill="#999" stroke="#999" strokeWidth={1} className="-scale-x-100" /></button>
      </div>
      <div className="mt-2 flex items-center justify-between pr-[2px] pl-[6px]">
        <input aria-label="对象名称" defaultValue="Line001" className="h-[18px] w-[165px] bg-[#666] px-[2px] leading-4" />
        <button aria-label="对象颜色" className="h-[18px] w-4 border-t border-l border-black bg-[#f5c595]" />
      </div>
      <div className="relative mt-[11px] h-[19px] pl-[6px]">
        <select aria-label="修改器列表" className="block h-[19px] w-full appearance-none bg-[#666]"><option>{''}</option></select>
        <svg viewBox="0 0 6 5" className="pointer-events-none absolute top-[7px] right-[7px] h-[5px] w-[6px]" aria-hidden="true"><path d="M0 0H6L3 5Z" fill="#eee" /></svg>
        <div className="absolute top-[19px] -right-px left-[5px] z-20 flex h-[821px] border border-[#0a6cbc] border-r-[#30c8f0] bg-[#666]">
          <ul role="listbox" aria-label="修改器" className="flex-1 pt-[3px]">
            {modifiers.map((m) => (
              <li key={m} role="option" aria-selected={m === '编辑多边形'} className={`h-[17px] pl-[18px] leading-[17px] ${m === '编辑多边形' ? 'bg-[#393939]' : ''}`}>{m}</li>
            ))}
          </ul>
          <div className="flex w-4 flex-col bg-[#f0f0f0] text-[#444]">
            <ChevronUp size={16} strokeWidth={2.5} />
            <div className="mt-[477px] flex-1 bg-[#cdcdcd]" />
            <ChevronDown size={16} strokeWidth={2.5} />
          </div>
        </div>
      </div>
    </aside>
  )
}

function Coord({ axis, value }: { axis: string; value: string }) {
  return (
    <label className="flex items-center gap-1 pr-[2px]">
      {axis}:
      <span className="relative">
        <input defaultValue={value} className="block h-[18px] w-[68px] bg-[#646464] pl-[3px] text-[11px] text-[#ccc]" />
        <svg viewBox="0 0 6 10" className="absolute top-1 right-[2px] h-[10px] w-[6px]" aria-hidden="true"><path d="M1 4L3 1L5 4ZM1 6L3 9L5 6Z" fill="#ddd" /></svg>
      </span>
    </label>
  )
}

function StatusBar() {
  return (
    <div className="flex h-[51px] shrink-0 bg-[#444] text-[11px] text-[#eee]">
      <div className="flex w-[105px] shrink-0 flex-col gap-[2px] border-r-2 border-[#222] pt-[3px] pl-px">
        <div className="h-[22px] w-[98px] border-2 border-t-[#888] border-r-white border-b-white border-l-[#888] bg-[#dcc3c3]" />
        <div className="h-[22px] w-[98px] overflow-hidden border-2 border-t-[#888] border-r-white border-b-white border-l-[#888] bg-white pl-[2px] font-['Liberation_Mono','Noto_Sans_CJK_SC',monospace] text-[11px] leading-[18px] whitespace-nowrap text-black">欢迎使用 MAXScr</div>
      </div>
      <div className="flex flex-1 flex-col justify-between py-2 pl-1 leading-4">
        <p>选择了 1 个 对象</p>
        <p className="-mb-[6px]">单击并拖动以选择并移动对象</p>
      </div>
      <div className="mr-[477px] flex w-[412px] shrink-0 flex-col pt-[6px] whitespace-nowrap">
        <div className="flex h-[19px] items-center">
          <button aria-label="孤立当前选择" className="flex w-[27px]"><Glyph size={15}><path d="M2 7V2H7M17 2H22V7M22 17V22H17M7 22H2V17" stroke={LIGHT} strokeWidth="2" /><path d="M8 7H16V17H8Z" fill={TEAL} /></Glyph></button>
          <button aria-label="选择锁定切换" className="flex w-[26px]"><Padlock size={15} /></button>
          <button aria-label="绝对模式" className="flex w-[23px]"><Glyph size={15}><path d="M2 2H22V22H2Z" stroke={LIGHT} strokeWidth="2" /><circle cx="12" cy="12" r="5" stroke={LIGHT} strokeWidth="2" /><path d="M12 2V7M12 17V22M2 12H7M17 12H22" stroke={LIGHT} strokeWidth="2" /></Glyph></button>
          <Coord axis="X" value="-0.229mm" />
          <Coord axis="Y" value="-23.07mm" />
          <Coord axis="Z" value="0.0mm" />
          <span className="pl-[3px]">栅格 = 254.0mm</span>
        </div>
        <div className="mt-[6px] flex h-5 items-center gap-[6px] pl-[302px] text-[#c8c8c8]">
          <button aria-label="自适应降级" className="flex h-5 w-[21px] items-center justify-center rounded-sm bg-[#5b80bb]"><Glyph size={15}><path d="M12 2L21 7V17L12 22L3 17V7ZM3 7L12 12L21 7M12 12V22" fill="#8aa" stroke="#222" strokeWidth="2" /></Glyph></button>
          添加时间标记
        </div>
      </div>
    </div>
  )
}

function TaskButton({ label, active, running, children }: { label: string; active?: boolean; running?: boolean; children: ReactNode }) {
  return (
    <button aria-label={label} className={`relative flex w-[49px] shrink-0 items-center justify-center ${active ? 'bg-[#5f6150]' : ''}`}>
      <Glyph size={26}>{children}</Glyph>
      {(active || running) && <span className={`absolute bottom-0 h-[3px] bg-[#6fb4ea] ${active ? 'inset-x-0' : 'inset-x-1'}`} />}
    </button>
  )
}

function Taskbar() {
  return (
    <footer className="flex h-[42px] shrink-0 bg-linear-to-r from-[#1c2a26] via-[#353722] to-[#3a3a26]">
      <button aria-label="开始" className="flex w-12 shrink-0 items-center justify-center">
        <Glyph size={17}><path d="M0 3L10 2V11.500H0ZM11.500 1.700L24 0V11.500H11.500ZM0 13H10V22.500L0 21ZM11.500 13H24V24L11.500 22.500Z" fill="#fff" /></Glyph>
      </button>
      <label className="flex w-[344px] shrink-0 items-center bg-[#f2f2f2] pl-3 text-[#222]">
        <Search size={18} strokeWidth={1.5} className="-scale-x-100" />
        <input aria-label="在这里输入你要搜索的内容" placeholder="在这里输入你要搜索的内容" className="ml-[10px] flex-1 bg-transparent text-sm placeholder:text-[#333]" />
      </label>
      <TaskButton label="Cortana"><circle cx="12" cy="12" r="6" stroke="#fff" strokeWidth="2" /></TaskButton>
      <TaskButton label="任务视图"><path d="M5 4V7H15V4M5 20V17H15V20M5 9.500H15V14.500H5Z" stroke="#fff" /><path d="M18 5V20" stroke="#fff" /><path d="M17 8H19V11H17Z" fill="#fff" /></TaskButton>
      <TaskButton label="Microsoft Edge">
        <circle cx="12" cy="12" r="11" fill="#1577cf" />
        <path d="M1 12C2 -1 23 -2 23 10C23 15 18 16 15 14C17 9 12 7 8 8C4 9 1 12 1 12Z" fill="#3fcf8e" />
        <path d="M1 12C3 6 12 5 14 10C9 9 7 15 11 19C14 22 19 20 21 18C17 25 2 25 1 12Z" fill="#1c93dd" />
        <path d="M14 10C16 13 14 14 15 15C17 17 21 16 22 15L21 18C15 21 10 18 10 13Q11 10 14 10Z" fill="#0e4d94" />
      </TaskButton>
      <TaskButton label="文件资源管理器" active>
        <path d="M2 4H10L12 6H22V20H2Z" fill="#e9a93a" /><path d="M2 8H22V20H2Z" fill="#fbd364" /><path d="M6 21V14H18V21H15V17H9V21Z" fill="#3d8fd6" />
      </TaskButton>
      <TaskButton label="截图工具">
        <ellipse cx="10" cy="10" rx="9" ry="6.500" fill="#9c8f8c" /><ellipse cx="12" cy="8" rx="9" ry="6.500" fill="#f2eeee" stroke="#c33" /><path d="M9 4L17 15M17 5L14 15" stroke="#8fa3ad" strokeWidth="1.500" /><ellipse cx="13" cy="19" rx="2" ry="3" stroke="#2c7fb8" strokeWidth="2" /><ellipse cx="19" cy="18" rx="3" ry="2" stroke="#2c7fb8" strokeWidth="2" />
      </TaskButton>
      <TaskButton label="画图" running>
        <path d="M3 19Q0 7 12 4Q22 3 20 13Q17 14 17 18Q13 24 3 19Z" fill="#d9e6ee" stroke="#6c8ba0" /><circle cx="7" cy="14" r="2" fill="#d33" /><circle cx="9" cy="9" r="2" fill="#3a6" /><circle cx="15" cy="8" r="2" fill="#38c" /><path d="M12 21L20 2L22 3L14 21Z" fill="#e8a040" />
      </TaskButton>
      <TaskButton label="Firefox">
        <path d="M14 1Q24 6 22 15Q19 23 12 23Q3 22 2 14Q2 7 6 3L8 7Q12 6 14 1Z" fill="#ff7a1a" /><path d="M14 1Q24 6 22 15Q19 24 10 22Q20 20 16 10Z" fill="#ffc832" /><circle cx="12" cy="13" r="5" fill="#7b42c9" /><path d="M3 8Q8 6 11 9Q7 11 8 15Q3 14 3 8Z" fill="#ff5a3a" />
      </TaskButton>
      <TaskButton label="优酷" running>
        <rect x="1" y="1" width="21" height="22" rx="3" fill="#fff" /><path d="M8 4L16 9" stroke="#18a8f0" strokeWidth="5" strokeLinecap="round" /><path d="M8 5L15 9L9 13" stroke="#f03a78" strokeWidth="5" strokeLinecap="round" strokeLinejoin="round" /><rect x="12" y="13" width="11" height="10" rx="2" fill="#2d9fe0" stroke="#fff" /><path d="M16 15V20M19 15V20" stroke="#fff" strokeWidth="2" />
      </TaskButton>
      <TaskButton label="便笺" running>
        <rect x="2" y="1" width="20" height="22" rx="1" fill="#f4f6fa" stroke="#5878b8" strokeWidth="2" /><path d="M5 15Q14 12 16 4" stroke="#4a7fc8" strokeWidth="3" /><path d="M8 20Q18 16 19 8" stroke="#e8a820" strokeWidth="3" />
      </TaskButton>
      <TaskButton label="3ds Max" active>
        <path d="M1 1H23V23H1Z" fill="#dff1f1" /><path d="M7 4Q15 1 15 6Q15 10 10 10Q16 10 16 14Q15 20 7 17" stroke="#13898b" strokeWidth="3.500" /><path d="M14 20H21" stroke="#13898b" strokeWidth="2" />
      </TaskButton>
    </footer>
  )
}

function SiteBadge() {
  return (
    <div className="fixed right-[15px] bottom-0 z-30 flex h-[228px] w-[456px] items-center bg-white pl-10 text-black">
      <svg viewBox="40 62 124 102" className="h-[102px] w-[124px] shrink-0" aria-hidden="true">
        <defs>
          <linearGradient id="tower" x1="0" y1="0" x2="0" y2="1"><stop offset="0" stopColor="#123f92" /><stop offset=".5" stopColor="#1d4d9e" /><stop offset="1" stopColor="#5a93cf" /></linearGradient>
        </defs>
        <path d="M50 105C66 84 95 65 125 65C152 65 165 82 160 98L157 105H153C160 86 145 71 122 72C97 73 70 86 50 105Z" fill="#9ac52c" />
        <path d="M46 116C36 134 44 161 80 161C118 161 160 128 162 105C150 130 118 147 86 147C56 146 43 133 46 116Z" fill="#163f94" />
        <path d="M103 82L124 92V101L109 107V140L103 142ZM134 103L149 111L134 126Z" fill="#dcdde2" />
        <path d="M49 122L68 113V140L58 137Z" fill="#163f94" />
        <path d="M78 90L100 79V143H78Z" fill="url(#tower)" />
        <path d="M111 109L129 101V131L111 138Z" fill="#163f94" />
      </svg>
      <div className="pt-2 whitespace-nowrap italic">
        <p className="font-['Noto_Sans_CJK_SC',sans-serif] text-[49px] leading-[46px] font-black">土木工程网</p>
        <p className="text-[33px] leading-9 font-semibold">www.civilcn.com</p>
      </div>
    </div>
  )
}

export default function App() {
  return (
    <div className="flex h-screen flex-col overflow-hidden bg-[#444] font-['Open_Sans','Noto_Sans_CJK_SC',sans-serif]">
      <TitleBar />
      <nav className="flex h-[21px] shrink-0 items-center border-t border-[#333] bg-linear-to-b from-[#a2a2a2] to-[#585858] pl-[43px] text-xs text-white">
        <div className="flex gap-px">
          {editMenus.map((m) => <button key={m} className="px-3 leading-4">{m}</button>)}
        </div>
        <div className="flex">
          {extraMenus.map((m) => <button key={m} className="px-[11px] leading-4">{m}</button>)}
        </div>
      </nav>
      <Toolbar />
      <Ribbon />
      <div className="flex min-h-0 flex-1">
        <div className="flex w-10 shrink-0 flex-col items-end justify-end border-t border-[#222] bg-linear-to-r from-[#383838] to-[#303030] pb-[2px]">
          <button aria-label="展开" className="mr-[11px] mb-[11px] flex h-[19px] w-[19px] items-center justify-center rounded-sm bg-[#555] text-[8px] text-white">▶</button>
          <button aria-label="视口布局" className="grid h-11 w-9 grid-cols-2 grid-rows-2 gap-px rounded-l-sm bg-linear-to-b from-[#47648c] to-[#4b86dc] px-[3px] py-2">
            {[0, 1, 2, 3].map((i) => <span key={i} className="border border-[#26364d] bg-[#5d6b7d]" />)}
          </button>
        </div>
        <SceneExplorer />
        <main className="flex min-w-0 flex-1 flex-col pl-[2px]">
          <Viewports />
          <TimeLine />
        </main>
        <CommandPanel />
      </div>
      <StatusBar />
      <Taskbar />
      <SiteBadge />
    </div>
  )
}
